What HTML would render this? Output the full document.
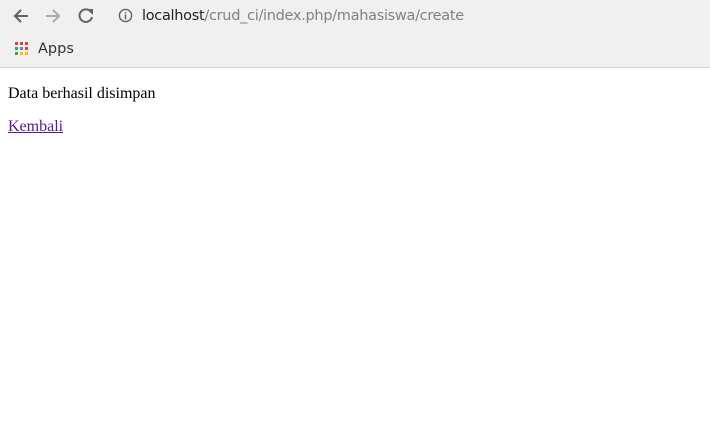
<!DOCTYPE html>
<html><head><style>
body{margin:0;width:710px;height:424px;background:#fff;overflow:hidden;position:relative;font-family:"Liberation Serif",serif}
.bar{position:absolute;left:0;top:0;width:710px;height:67px;background:#f1f0f1;border-bottom:1px solid #cfcfcf}
.url{position:absolute;left:142px;top:8px;font:14.5px "DejaVu Sans","Liberation Sans",sans-serif;color:#7a8389;letter-spacing:-0.3px}
.url b{font-weight:normal;color:#202124}
.apps{position:absolute;left:38px;top:41px;font:14.5px "DejaVu Sans","Liberation Sans",sans-serif;color:#333}
.g{position:absolute;width:3px;height:3px}
p{position:absolute;left:8px;margin:0;font-size:16px}
</style></head><body>
<div class="bar">
<svg style="position:absolute;left:12px;top:7px" width="18" height="18" viewBox="0 0 18 18"><path d="M16 9H3M9 3L3 9l6 6" stroke="#5f6368" stroke-width="2" fill="none"/></svg>
<svg style="position:absolute;left:44px;top:7px" width="18" height="18" viewBox="0 0 18 18"><path d="M2 9h13M9 3l6 6-6 6" stroke="#a9a9ab" stroke-width="2" fill="none"/></svg>
<svg style="position:absolute;left:77px;top:7px" width="18" height="18" viewBox="0 0 18 18"><path d="M14 5A6.3 6.3 0 1 0 15 10" stroke="#5f6368" stroke-width="2" fill="none"/><path d="M10 2h6v6z" fill="#5f6368"/></svg>
<svg style="position:absolute;left:118px;top:8px" width="15" height="15" viewBox="0 0 16 16"><circle cx="8" cy="8" r="6.5" stroke="#5f6368" stroke-width="1.5" fill="none"/><path d="M8 7v5M8 4.5v1.5" stroke="#5f6368" stroke-width="1.6"/></svg>
<div class="url"><b>localhost</b>/crud_ci/index.php/mahasiswa/create</div>
<div class="g" style="left:15px;top:42px;background:#e94235"></div><div class="g" style="left:20px;top:42px;background:#e94235"></div><div class="g" style="left:25px;top:42px;background:#e94235"></div>
<div class="g" style="left:15px;top:47px;background:#34a853"></div><div class="g" style="left:20px;top:47px;background:#4285f4"></div><div class="g" style="left:25px;top:47px;background:#e94235"></div>
<div class="g" style="left:15px;top:52px;background:#34a853"></div><div class="g" style="left:20px;top:52px;background:#fbbc05"></div><div class="g" style="left:25px;top:52px;background:#fbbc05"></div>
<div class="apps">Apps</div>
</div>
<p style="top:85px">Data berhasil disimpan</p>
<p style="top:118px"><a href="#" style="color:#551a8b">Kembali</a></p>
</body></html>
